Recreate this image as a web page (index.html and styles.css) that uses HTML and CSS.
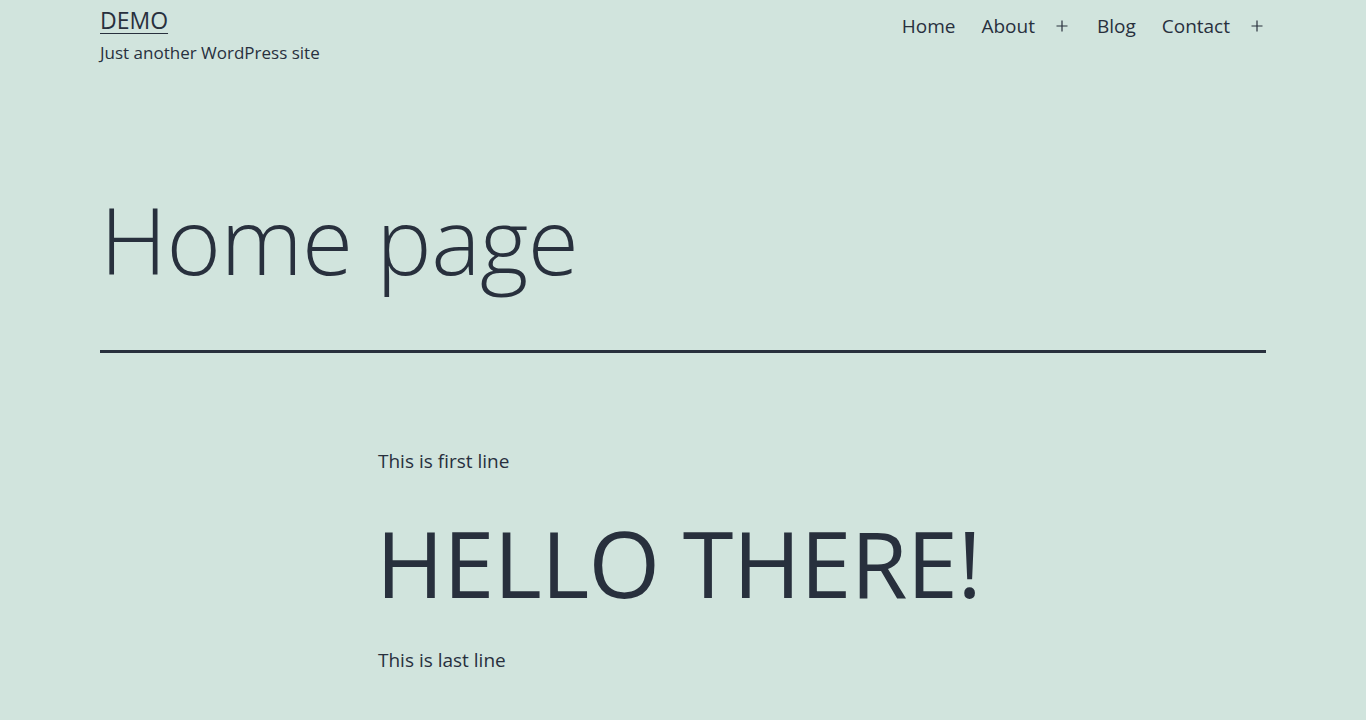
FILE: index.html
```html
<!DOCTYPE html>
<html lang="en">
<head>
<meta charset="utf-8">
<title>DEMO – Just another WordPress site</title>
<link rel="stylesheet" href="styles.css">
</head>
<body>
<header class="site-header">
  <div class="branding">
    <p class="site-title"><a href="#">DEMO</a></p>
    <p class="site-description">Just another WordPress site</p>
  </div>
  <nav class="primary-nav">
    <ul class="menu">
      <li class="menu-item"><a href="#">Home</a></li>
      <li class="menu-item"><a href="#">About</a><span class="sub-toggle"><svg viewBox="0 0 18 18" width="18" height="18"><path d="M9 3.5v11M3.5 9h11" stroke="currentColor" stroke-width="1.2" fill="none"/></svg></span></li>
      <li class="menu-item"><a href="#">Blog</a></li>
      <li class="menu-item"><a href="#">Contact</a><span class="sub-toggle"><svg viewBox="0 0 18 18" width="18" height="18"><path d="M9 3.5v11M3.5 9h11" stroke="currentColor" stroke-width="1.2" fill="none"/></svg></span></li>
    </ul>
  </nav>
</header>
<main class="site-main">
  <header class="entry-header">
    <h1 class="entry-title">Home page</h1>
  </header>
  <div class="entry-content">
    <p class="para">This is first line</p>
    <h2 class="big-heading">HELLO THERE!</h2>
    <p class="para">This is last line</p>
  </div>
</main>
</body>
</html>
```

FILE: styles.css
```css
html, body {
  margin: 0;
  padding: 0;
}
body {
  background: #d1e4dd;
  color: #28303d;
  font-family: "Open Sans", "Noto Sans", sans-serif;
  font-size: 20px;
  line-height: 1.7;
}
a { color: #28303d; }
p, h1, h2, ul { margin: 0; }

.site-header {
  display: flex;
  justify-content: space-between;
  align-items: flex-start;
  padding: 6px 100px 0 100px;
}
.site-title {
  font-size: 23px;
  line-height: 1.3;
  text-transform: uppercase;
}
.site-title a {
  text-decoration: underline;
  text-decoration-thickness: 1px;
  text-underline-offset: 4px;
}
.site-description {
  font-size: 17px;
  line-height: 1.4;
  margin-top: 5px;
}
.menu {
  list-style: none;
  padding: 0;
  display: flex;
  align-items: center;
  margin-top: 8px;
}
.menu-item {
  display: flex;
  align-items: center;
  margin-left: 26px;
}
.menu-item a {
  text-decoration: none;
  font-size: 19px;
  line-height: 1.3;
}
.sub-toggle {
  display: flex;
  align-items: center;
  margin-left: 18px;
  color: #28303d;
}
.site-main {
  padding: 0 100px;
}
.entry-header {
  padding-top: 114px;
  padding-bottom: 50px;
  border-bottom: 3px solid #28303d;
}
.entry-title {
  font-size: 93px;
  font-weight: 300;
  line-height: 1.3;
  letter-spacing: -0.5px;
}
.entry-content {
  width: 610px;
  margin: 0 auto;
  padding-top: 92px;
}
.para {
  font-size: 19px;
  line-height: 1.7;
}
.big-heading {
  font-size: 92px;
  font-weight: 400;
  line-height: 1.3;
  letter-spacing: -0.6px;
  margin: 26px 0 22px -2px;
}
```
